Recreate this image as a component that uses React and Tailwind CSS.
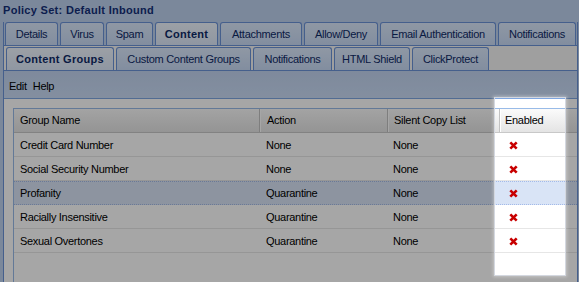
import React from "react";

const tabs1 = [
  { t: "Details", w: "w-[53px]" },
  { t: "Virus", w: "w-[44px]" },
  { t: "Spam", w: "w-[47px]" },
  { t: "Content", w: "w-[63px]", a: true },
  { t: "Attachments", w: "w-[82px]" },
  { t: "Allow/Deny", w: "w-[74px]" },
  { t: "Email Authentication", w: "w-[116px]" },
  { t: "Notifications", w: "w-[78px]" },
];

const tabs2 = [
  { t: "Content Groups", w: "w-[108px]", a: true },
  { t: "Custom Content Groups", w: "w-[135px]" },
  { t: "Notifications", w: "w-[79px]" },
  { t: "HTML Shield", w: "w-[76px]" },
  { t: "ClickProtect", w: "w-[77px]" },
];

const rows = [
  { n: "Credit Card Number", a: "None", s: "None" },
  { n: "Social Security Number", a: "None", s: "None" },
  { n: "Profanity", a: "Quarantine", s: "None", sel: true },
  { n: "Racially Insensitive", a: "Quarantine", s: "None" },
  { n: "Sexual Overtones", a: "Quarantine", s: "None" },
];

function Tab({ t, w, a }) {
  return (
    <div
      className={`${w} h-[23px] shrink-0 border border-b-0 border-[#6a92d8] rounded-t-[3px] flex items-center justify-center text-[#0e2a66] ${
        a
          ? "bg-gradient-to-b from-[#f0f6fe] to-[#dce8f9] font-bold tracking-[0.3px]"
          : "bg-gradient-to-b from-[#dce9fc] to-[#c8daf5] tracking-[-0.3px]"
      }`}
    >
      {t}
    </div>
  );
}

function XIcon() {
  return (
    <svg width="9" height="9" viewBox="0 0 9 9">
      <path d="M1.3 1.3 L7.7 7.7 M7.7 1.3 L1.3 7.7" stroke="#c80000" strokeWidth="2.6" strokeLinecap="butt" />
    </svg>
  );
}

export default function App() {
  return (
    <div className="relative w-[579px] h-[282px] overflow-hidden bg-[#bed1ee] font-['Liberation_Sans',Arial,sans-serif] text-[11px] text-black">
      <div className="h-[22px] pl-[3px] leading-[20px] font-bold tracking-[0.3px] text-[#132f78]">
        Policy Set: Default Inbound
      </div>
      <div className="ml-[3px] w-[575px] h-[260px] border-x border-[#6a92d8] flex flex-col">
        <div className="flex gap-[2px] pl-[1px] h-[24px] border-b border-[#6a92d8]">
          {tabs1.map((x) => (
            <Tab key={x.t} {...x} />
          ))}
        </div>
        <div className="flex gap-[2px] pl-[2px] pt-[1px] h-[25px] border-b border-[#6a92d8] bg-[#f4f4f4]">
          {tabs2.map((x) => (
            <Tab key={x.t} {...x} />
          ))}
        </div>
        <div className="h-[28px] shrink-0 border-b border-[#7fa6e0] bg-gradient-to-b from-[#c2d4f0] to-[#cadcf6] flex gap-[6px] pl-[5px] pt-[7px] leading-[16px] tracking-[-0.3px]">
          <span>Edit</span>
          <span>Help</span>
        </div>
        <div className="flex-1 bg-white pt-[9px] pl-[9px]">
          <div className="h-full border-t border-l border-[#99bbe8] tracking-[-0.3px]">
            <div className="flex h-[24px] border-b border-[#c8c8c8] bg-gradient-to-b from-[#fbfbfb] to-[#e4e4e4]">
              <div className="w-[246px] shrink-0 pl-[6px] flex items-center border-r border-[#c2c2c2]">Group Name</div>
              <div className="w-[128px] shrink-0 pl-[6px] flex items-center border-l border-l-white border-r border-r-[#c2c2c2]">Action</div>
              <div className="w-[112px] shrink-0 pl-[5px] flex items-center border-l border-l-white border-r border-r-[#c2c2c2]">Silent Copy List</div>
              <div className="w-[120px] shrink-0 pl-[4px] flex items-center border-l border-l-white">Enabled</div>
            </div>
            {rows.map((r) => (
              <div
                key={r.n}
                className={`flex h-[24px] border-y ${
                  r.sel
                    ? "border-dotted border-[#a3bae9] bg-[#d9e4f6]"
                    : "border-t-white border-b-[#e6e6e6] bg-white"
                }`}
              >
                <div className="w-[246px] shrink-0 pl-[6px] flex items-center">{r.n}</div>
                <div className="w-[128px] shrink-0 pl-[6px] flex items-center">{r.a}</div>
                <div className="w-[112px] shrink-0 pl-[5px] flex items-center">{r.s}</div>
                <div className="w-[120px] shrink-0 pl-[9px] flex items-center">
                  <XIcon />
                </div>
              </div>
            ))}
          </div>
        </div>
      </div>
      <div className="absolute left-[495px] top-[98px] w-[70px] h-[177px] shadow-[0_0_0_1px_rgba(212,216,224,1),0_0_3px_2px_rgba(255,255,255,0.35),0_0_0_900px_rgba(0,0,0,0.35)]" />
    </div>
  );
}
